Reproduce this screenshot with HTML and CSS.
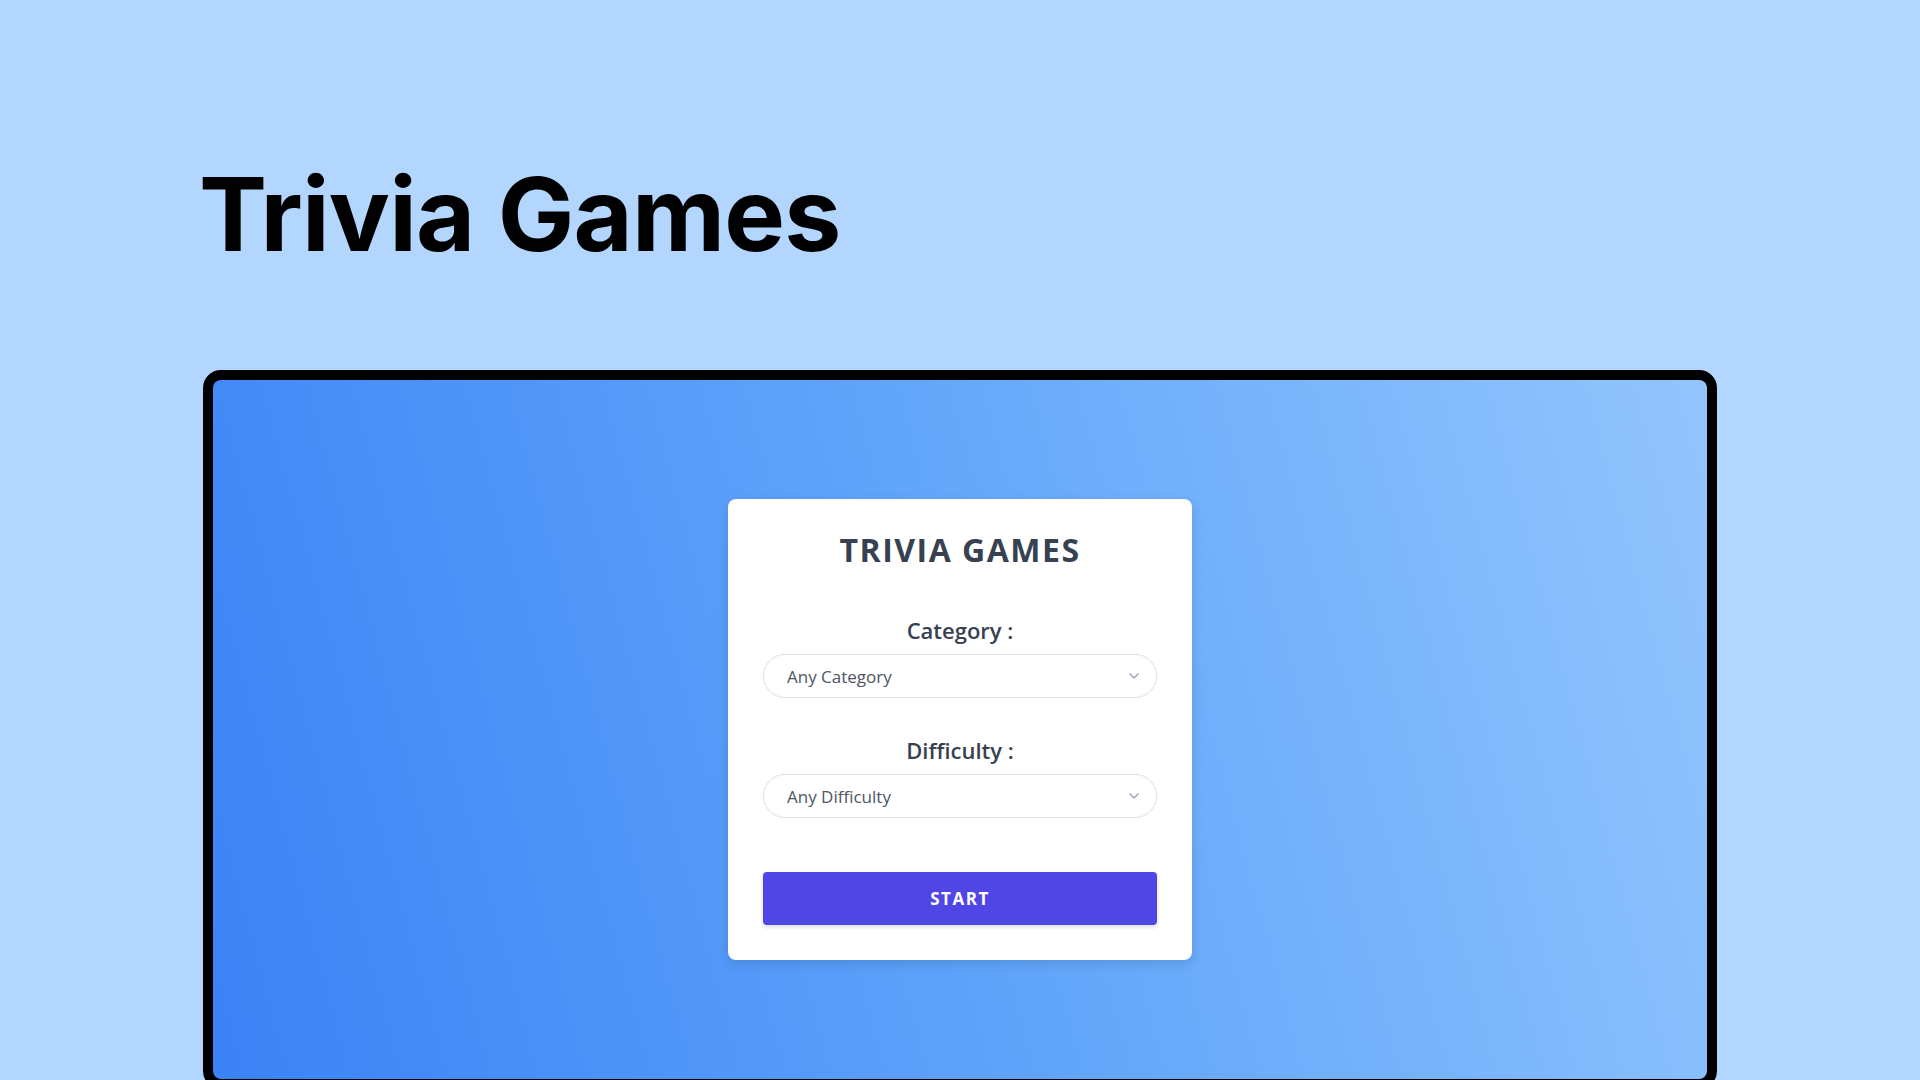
FILE: index.html
```html
<!DOCTYPE html>
<html lang="en">
<head>
<meta charset="utf-8">
<title>Trivia Games</title>
<link rel="stylesheet" href="styles.css">
</head>
<body>
<header class="hero">
  <h1 class="hero-title">Trivia Games</h1>
</header>
<section class="frame">
  <div class="screen">
    <div class="card">
      <h2 class="card-title">TRIVIA GAMES</h2>
      <div class="field">
        <label class="field-label">Category :</label>
        <div class="select">
          <span class="select-text">Any Category</span>
          <svg class="chev" width="10" height="6" viewBox="0 0 10 6"><path d="M1 1l4 4 4-4" fill="none" stroke="#94a3b8" stroke-width="1.4" stroke-linecap="round" stroke-linejoin="round"/></svg>
        </div>
      </div>
      <div class="field">
        <label class="field-label">Difficulty :</label>
        <div class="select">
          <span class="select-text">Any Difficulty</span>
          <svg class="chev" width="10" height="6" viewBox="0 0 10 6"><path d="M1 1l4 4 4-4" fill="none" stroke="#94a3b8" stroke-width="1.4" stroke-linecap="round" stroke-linejoin="round"/></svg>
        </div>
      </div>
      <button class="start">START</button>
    </div>
  </div>
</section>
</body>
</html>
```
FILE: styles.css
```css
html, body {
  margin: 0;
  padding: 0;
  height: 1080px;
  overflow: hidden;
}
body {
  background: #b3d6fe;
  font-family: "Open Sans", "Noto Sans", sans-serif;
}
.hero {
  padding: 163px 0 0 199px;
  height: 370px;
  box-sizing: border-box;
}
.hero-title {
  margin: 0;
  font-family: Inter, "Liberation Sans", sans-serif;
  font-weight: 700;
  font-size: 102px;
  line-height: 1;
  color: #000;
  letter-spacing: -0.8px;
}
.frame {
  margin-left: 203px;
  width: 1514px;
  box-sizing: border-box;
  border: 10px solid #000;
  border-radius: 18px;
  background: #000;
}
.screen {
  height: 699px;
  border-radius: 8px;
  background: linear-gradient(75deg, #3b82f6 0%, #60a5fa 50%, #93c5fd 100%);
  display: flex;
  align-items: center;
  justify-content: center;
}
.card {
  width: 464px;
  box-sizing: border-box;
  background: #fff;
  border-radius: 8px;
  padding: 30px 35px 35px;
  box-shadow: 0 4px 12px rgba(0, 0, 0, 0.12);
  display: flex;
  flex-direction: column;
}
.card-title {
  margin: 0 0 44px;
  text-align: center;
  font-size: 32px;
  font-weight: 700;
  color: #374151;
  letter-spacing: 1.5px;
  line-height: 42px;
}
.field {
  display: flex;
  flex-direction: column;
  align-items: stretch;
  margin-bottom: 37px;
}
.field-label {
  text-align: center;
  font-size: 22px;
  font-weight: 600;
  color: #374151;
  line-height: 30px;
  margin-bottom: 9px;
}
.select {
  height: 44px;
  box-sizing: border-box;
  border: 1.5px solid #dcdfe5;
  border-radius: 22px;
  display: flex;
  align-items: center;
  justify-content: space-between;
  padding: 0 17px 0 23px;
}
.select-text {
  font-size: 17px;
  color: #4b5563;
}
.chev {
  display: block;
}
.start {
  margin-top: 17px;
  height: 53px;
  border: none;
  border-radius: 4px;
  background: #4f46e5;
  color: #fff;
  font-family: "Open Sans", "Noto Sans", sans-serif;
  font-weight: 700;
  font-size: 17px;
  letter-spacing: 1.5px;
  box-shadow: 0 2px 4px rgba(0, 0, 0, 0.15);
}
```
